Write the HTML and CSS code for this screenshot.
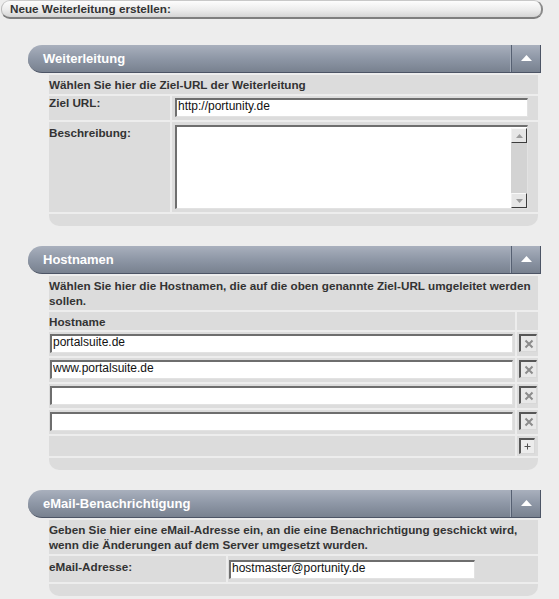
FILE: index.html
```html
<!DOCTYPE html>
<html lang="de">
<head>
<meta charset="utf-8">
<title>Neue Weiterleitung erstellen</title>
<link rel="stylesheet" href="styles.css">
</head>
<body>
<div class="topbar"><span>Neue Weiterleitung erstellen:</span></div>

<section class="panel panel-first">
  <div class="panel-head">
    <h2 class="panel-title">Weiterleitung</h2>
    <button class="toggle" type="button" aria-label="einklappen"><svg width="11" height="6" viewBox="0 0 11 6"><polygon points="5.5,0 11,6 0,6" fill="#fff"/></svg></button>
  </div>
  <div class="panel-body grid-url">
    <div class="cell desc">Wählen Sie hier die Ziel-URL der Weiterleitung</div>
    <div class="cell label label-tight">Ziel URL:</div>
    <div class="cell field field-url"><input class="text w-url" type="text" value="http://portunity.de"></div>
    <div class="cell label label-desc">Beschreibung:</div>
    <div class="cell field field-area">
      <div class="textarea">
        <textarea class="area-input"></textarea>
        <div class="fake-scroll">
          <div class="sb-btn"><svg width="7" height="4" viewBox="0 0 7 4"><polygon points="3.5,0 7,4 0,4" fill="#9c9c9c"/></svg></div>
          <div class="sb-track"></div>
          <div class="sb-btn"><svg width="7" height="4" viewBox="0 0 7 4"><polygon points="0,0 7,0 3.5,4" fill="#9c9c9c"/></svg></div>
        </div>
      </div>
    </div>
  </div>
  <div class="panel-foot"></div>
</section>

<section class="panel">
  <div class="panel-head">
    <h2 class="panel-title">Hostnamen</h2>
    <button class="toggle" type="button" aria-label="einklappen"><svg width="11" height="6" viewBox="0 0 11 6"><polygon points="5.5,0 11,6 0,6" fill="#fff"/></svg></button>
  </div>
  <div class="panel-body grid-hosts">
    <div class="cell desc">Wählen Sie hier die Hostnamen, die auf die oben genannte Ziel-URL umgeleitet werden sollen.</div>
    <div class="cell colhead">Hostname</div>
    <div class="cell"></div>

    <div class="cell field field-host"><input class="text w-host" type="text" value="portalsuite.de"></div>
    <div class="cell btn-cell"><button class="icon-btn del" type="button" aria-label="entfernen"><svg width="10" height="10" viewBox="0 0 10 10"><path d="M1.5 1.5 L8.5 8.5 M8.5 1.5 L1.5 8.5" stroke="#8c8c8c" stroke-width="2"/></svg></button></div>

    <div class="cell field field-host"><input class="text w-host" type="text" value="www.portalsuite.de"></div>
    <div class="cell btn-cell"><button class="icon-btn del" type="button" aria-label="entfernen"><svg width="10" height="10" viewBox="0 0 10 10"><path d="M1.5 1.5 L8.5 8.5 M8.5 1.5 L1.5 8.5" stroke="#8c8c8c" stroke-width="2"/></svg></button></div>

    <div class="cell field field-host"><input class="text w-host" type="text" value=""></div>
    <div class="cell btn-cell"><button class="icon-btn del" type="button" aria-label="entfernen"><svg width="10" height="10" viewBox="0 0 10 10"><path d="M1.5 1.5 L8.5 8.5 M8.5 1.5 L1.5 8.5" stroke="#8c8c8c" stroke-width="2"/></svg></button></div>

    <div class="cell field field-host"><input class="text w-host" type="text" value=""></div>
    <div class="cell btn-cell"><button class="icon-btn del" type="button" aria-label="entfernen"><svg width="10" height="10" viewBox="0 0 10 10"><path d="M1.5 1.5 L8.5 8.5 M8.5 1.5 L1.5 8.5" stroke="#8c8c8c" stroke-width="2"/></svg></button></div>

    <div class="cell"></div>
    <div class="cell btn-cell btn-cell-add"><button class="icon-btn add" type="button" aria-label="hinzufügen"><svg width="7" height="7" viewBox="0 0 7 7"><path d="M3.5 0.5 V6.5 M0.5 3.5 H6.5" stroke="#505050" stroke-width="1"/></svg></button></div>
  </div>
  <div class="panel-foot"></div>
</section>

<section class="panel">
  <div class="panel-head">
    <h2 class="panel-title">eMail-Benachrichtigung</h2>
    <button class="toggle" type="button" aria-label="einklappen"><svg width="11" height="6" viewBox="0 0 11 6"><polygon points="5.5,0 11,6 0,6" fill="#fff"/></svg></button>
  </div>
  <div class="panel-body grid-mail">
    <div class="cell desc">Geben Sie hier eine eMail-Adresse ein, an die eine Benachrichtigung geschickt wird, wenn die Änderungen auf dem Server umgesetzt wurden.</div>
    <div class="cell label label-mail">eMail-Adresse:</div>
    <div class="cell field field-mail"><input class="text w-mail" type="text" value="hostmaster@portunity.de"></div>
  </div>
  <div class="panel-foot"></div>
</section>
</body>
</html>
```
FILE: styles.css
```css
* { box-sizing: border-box; }

html, body { margin: 0; padding: 0; }

body {
  width: 559px;
  min-height: 599px;
  background: #ededed;
  font-family: "Liberation Sans", Arial, sans-serif;
  color: #333;
  overflow: hidden;
}

/* top title bar */
.topbar {
  margin-left: 1px;
  width: 542px;
  height: 19px;
  border-radius: 9px;
  background: linear-gradient(#fdfdfd, #ececec 55%, #d4d4d4);
  border-top: 1px solid #c8c8c8;
  border-left: 1px solid #b9b9b9;
  border-right: 2px solid #8a8a8a;
  border-bottom: 2px solid #7e7e7e;
  padding-left: 8px;
  font-size: 11.7px;
  font-weight: bold;
  line-height: 15px;
  color: #333;
}

/* panels */
.panel {
  margin: 20px 0 0 28px;
  width: 513px;
}
.panel-first { margin-top: 26px; }

.panel-head {
  display: flex;
  height: 28px;
  border-radius: 14px 0 0 14px;
  background: linear-gradient(#a9b0bd, #8e97a6 50%, #78818f);
  border-bottom: 1px solid #4c5465;
  border-right: 1px solid #4c5465;
}

.panel-title {
  flex: 1;
  margin: 0;
  padding-left: 15px;
  font-size: 13px;
  font-weight: bold;
  line-height: 27px;
  color: #fff;
  box-shadow: inset -1px 0 0 #a3abb8;
}

.toggle {
  width: 29px;
  margin: 0;
  padding: 0;
  border: 0;
  border-left: 1px solid #566072;
  background: transparent;
  display: flex;
  align-items: center;
  justify-content: center;
}
.toggle svg { display: block; margin-top: -2px; }

.panel-body {
  margin: 2px 0 0 21px;
  width: 489px;
  display: grid;
  gap: 2px;
}
.grid-url { grid-template-columns: 121px 1fr; }
.grid-hosts { grid-template-columns: 1fr 21px; }
.grid-mail { grid-template-columns: 177px 1fr; }

.cell { background: #dcdcdc; }

.desc {
  grid-column: 1 / -1;
  padding: 2px 0;
  font-size: 11.7px;
  font-weight: bold;
  line-height: 15px;
}

.label {
  font-size: 11.7px;
  font-weight: bold;
  line-height: 13px;
}
.label-tight { padding-top: 0; }
.label-desc { padding-top: 4px; }
.label-mail { padding-top: 3px; line-height: 15px; }

.colhead {
  padding: 2px 0 1px;
  font-size: 11.7px;
  font-weight: bold;
  line-height: 15px;
}

.field-url { padding: 2px 0 3px 3px; }
.field-area { padding: 3px 0 3px 3px; }
.field-host { padding: 2px 0 3px 1px; }
.field-mail { padding: 4px 0 3px 1px; }

.btn-cell { padding: 2px 0 0 2px; }
.btn-cell-add { padding: 2px 0 2px 2px; }

.panel-foot {
  margin: 2px 0 0 21px;
  width: 489px;
  height: 12px;
  background: #dcdcdc;
  border-radius: 0 0 10px 10px;
}

/* inputs */
.text {
  display: block;
  height: 19px;
  margin: 0;
  padding: 0 1px 4px;
  border-style: solid;
  border-width: 2px 1px 1px 2px;
  border-color: #6e6e6e #e2e2e2 #e2e2e2 #6e6e6e;
  background: #fff;
  font-family: "Liberation Sans", Arial, sans-serif;
  font-size: 12px;
  color: #111;
  outline: none;
}
.w-url { width: 353px; }
.w-host { width: 463px; }
.w-mail { width: 246px; }

.textarea {
  display: flex;
  width: 353px;
  height: 84px;
  border-style: solid;
  border-width: 2px 1px 1px 2px;
  border-color: #6e6e6e #e2e2e2 #e2e2e2 #6e6e6e;
  background: #fff;
}
.area-input {
  flex: 1;
  border: 0;
  margin: 0;
  padding: 1px;
  resize: none;
  outline: none;
  background: #fff;
  font-family: "Liberation Sans", Arial, sans-serif;
  font-size: 12px;
}
.fake-scroll {
  width: 16px;
  margin-top: 1px;
  display: flex;
  flex-direction: column;
  background: #d3d3d3;
}
.sb-btn {
  height: 15px;
  background: #e6e6e6;
  border-style: solid;
  border-width: 1px;
  border-color: #f8f8f8 #3c3c3c #3c3c3c #f0f0f0;
  display: flex;
  align-items: center;
  justify-content: center;
}
.sb-btn svg { display: block; }
.sb-track { flex: 1; }

/* small square buttons */
.icon-btn {
  display: flex;
  align-items: center;
  justify-content: center;
  margin: 0;
  padding: 0;
  border-style: solid;
  border-width: 2px 1px 1px 2px;
  border-color: #575757 #d8d8d8 #d8d8d8 #575757;
  background: #e8e8e8;
}
.icon-btn svg { display: block; }
.del { width: 18px; height: 18px; }
.add { width: 16px; height: 16px; background: #ececec; }
```
